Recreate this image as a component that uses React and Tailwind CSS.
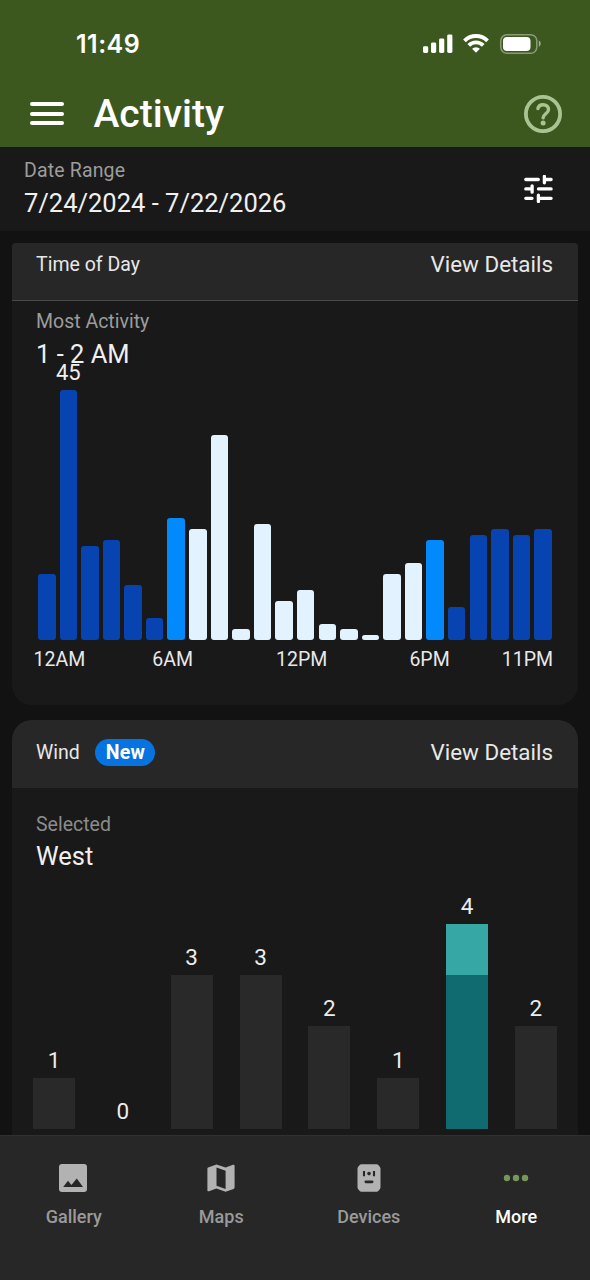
import React from 'react';
import clsx from 'clsx';

// Detections per hour, midnight to 11PM
const hourly = [12, 45, 17, 18, 10, 4, 22, 20, 37, 2, 21, 7, 9, 3, 2, 1, 12, 14, 18, 6, 19, 20, 19, 20];

const wind = [
  { count: 1 },
  { count: 0 },
  { count: 3 },
  { count: 3 },
  { count: 2 },
  { count: 1 },
  { count: 4, selected: true },
  { count: 2 },
];

const MAX_HOURLY = 45;

const hourColor = (hour) => {
  if (hour === 6 || hour === 18) return 'bg-[#0289fb]'; // dawn / dusk
  if (hour > 6 && hour < 18) return 'bg-[#e2f2fe]';
  return 'bg-[#0744b2]';
};

const StatusBar = () => (
  <div className="h-[80px] pt-[32px] pl-[76px] pr-[48px] flex justify-between items-start text-white">
    <span className="font-['Inter'] font-semibold text-[25px] leading-[25px] tracking-[0.5px]">11:49</span>
    <div className="flex items-start pt-[2px]">
      <svg width="30" height="19" viewBox="0 0 30 19" fill="currentColor">
        <rect x="0" y="12.2" width="5.2" height="6.8" rx="1.4" />
        <rect x="8" y="8.6" width="5.2" height="10.4" rx="1.4" />
        <rect x="16.1" y="4.6" width="5.2" height="14.4" rx="1.4" />
        <rect x="24.2" y="0.5" width="5.2" height="18.5" rx="1.4" />
      </svg>
      <svg className="ml-[10px]" width="26" height="19" viewBox="0 0 26 19" fill="none" stroke="currentColor" strokeWidth="3.9">
        <path d="M1.5 6.8a16.3 16.3 0 0 1 23 0" />
        <path d="M5.8 11.4a10.2 10.2 0 0 1 14.4 0" />
        <path d="M13 18.8l-3.9-4a5.4 5.4 0 0 1 7.8 0z" fill="currentColor" stroke="none" />
      </svg>
      <svg className="ml-[11px]" width="42" height="20" viewBox="0 0 42 20">
        <rect x="0.8" y="0.8" width="36" height="18.4" rx="6" fill="none" stroke="#fff" strokeOpacity="0.4" strokeWidth="1.5" />
        <rect x="3" y="3" width="27.5" height="14" rx="4" fill="#fff" />
        <path d="M38.8 6.6c2.6 1 2.6 5.2 0 6.2z" fill="#fff" fillOpacity="0.5" />
      </svg>
    </div>
  </div>
);

const Header = () => (
  <header className="h-[147px] shrink-0 bg-[#3c581f]">
    <StatusBar />
    <div className="h-[67px] pl-[30px] pr-[28px] flex items-center text-white">
      <button aria-label="Menu" className="w-[34px] flex flex-col gap-[5.5px]">
        <span className="h-[4px] rounded-full bg-white"></span>
        <span className="h-[4px] rounded-full bg-white"></span>
        <span className="h-[4px] rounded-full bg-white"></span>
      </button>
      <h1 className="ml-[29.5px] text-[39px] leading-[44px] font-medium">Activity</h1>
      <button aria-label="Help" className="ml-auto">
        <svg width="38" height="38" viewBox="0 0 38 38" fill="none" stroke="#a9c492">
          <circle cx="19" cy="19" r="17.1" strokeWidth="3.8" />
          <path d="M13.9 13.6c.5-2.4 2.5-3.9 5.2-3.9 3.2 0 5.4 2 5.4 4.7 0 4-5.2 4.6-5.4 8.4" strokeWidth="3.4" strokeLinecap="round" />
          <circle cx="19.1" cy="28" r="2.5" fill="#a9c492" stroke="none" />
        </svg>
      </button>
    </div>
  </header>
);

const DateRange = () => (
  <section className="h-[84px] shrink-0 bg-[#191919] pl-6 pr-[37px] pt-[12px] flex justify-between">
    <div>
      <p className="text-[19.5px] leading-[23px] tracking-[0.15px] text-[#9c9c9c]">Date Range</p>
      <p className="mt-[6px] text-[25.5px] leading-[30px] text-[#f0f0f0]">7/24/2024 - 7/22/2026</p>
    </div>
    <button aria-label="Filters" className="self-start mt-[16px]">
      <svg width="29" height="28" viewBox="0 0 29 28" fill="none" stroke="#fff" strokeWidth="3.3" strokeLinecap="round">
        <path d="M1.8 4.5h12.5M20.4 1.4v6.4M20.4 4.5h6.7" />
        <path d="M1.8 13.9h6.1M8.1 10.8v6.4M14.5 13.9h12.6" />
        <path d="M1.8 23.3h6.2M14.4 20.2v6.4M14.4 23.3h12.7" />
      </svg>
    </button>
  </section>
);

const ViewDetails = () => (
  <button className="text-[22.4px] leading-[27px] text-[#e8e8e8]">View Details</button>
);

const TimeOfDayCard = () => (
  <section className="h-[462px] rounded-t-[4px] rounded-b-[20px] bg-[#191919] overflow-hidden">
    <div className="h-[58px] pl-6 pr-[25px] pt-[8px] flex items-start justify-between bg-[#272727] border-b border-[#4b4b4b]">
      <h2 className="text-[19.5px] leading-[27px] text-[#e8e8e8]">Time of Day</h2>
      <ViewDetails />
    </div>

    <div className="pl-6 pt-[9px]">
      <p className="text-[19.5px] leading-[23px] text-[#9c9c9c]">Most Activity</p>
      <p className="mt-[6px] text-[25.5px] leading-[30px] text-[#f0f0f0]">1 - 2 AM</p>
    </div>

    {/* Hourly bars */}
    <div className="mt-[21.3px] h-[250px] pl-[26px] pr-[26px] flex items-end justify-between">
      {hourly.map((count, hour) => (
        <div
          key={hour}
          className={clsx('relative w-[17.5px] rounded-[3px]', hourColor(hour))}
          style={{ height: `${(count / MAX_HOURLY) * 100}%` }}
        >
          {count === MAX_HOURLY && (
            <span className="absolute bottom-full left-1/2 -translate-x-1/2 mb-[3px] text-[22px] leading-[28px] text-[#f0f0f0]">
              {count}
            </span>
          )}
        </div>
      ))}
    </div>

    <div className="mt-[7.7px] pl-[21.5px] pr-[25px] flex justify-between text-[19.5px] leading-[24px] text-[#e8e8e8]">
      <span>12AM</span>
      <span className="ml-[15px]">6AM</span>
      <span className="ml-[31px]">12PM</span>
      <span className="ml-[30px]">6PM</span>
      <span>11PM</span>
    </div>
  </section>
);

const WindCard = () => (
  <section className="mt-[15px] h-[440px] rounded-t-[20px] bg-[#191919] overflow-hidden">
    <div className="h-[68px] pl-6 pr-[25px] pt-[19px] flex items-start justify-between bg-[#272727]">
      <div className="flex items-center">
        <h2 className="text-[19.5px] leading-[27px] text-[#e8e8e8]">Wind</h2>
        <span className="ml-[15.5px] w-[60px] h-[27px] rounded-full bg-[#0574e0] text-center text-[19.5px] leading-[27px] tracking-[0.2px] font-bold text-white">
          New
        </span>
      </div>
      <ViewDetails />
    </div>

    <div className="pl-6 pt-[25px]">
      <p className="text-[19.5px] leading-[23px] text-[#8c8c8c]">Selected</p>
      <p className="mt-[5px] text-[25.5px] leading-[30px] text-[#f0f0f0]">West</p>
    </div>

    <div className="mt-[19px] h-[239px] pl-[21px] pr-[21px] flex items-end justify-between">
      {wind.map(({ count, selected }, i) => (
        <div key={i} className="w-[42px] flex flex-col">
          <span className="mb-[4px] text-center text-[22.5px] leading-[28px] text-[#ececec]">{count}</span>
          {selected && <div className="h-[51px] bg-[#37a7a6]"></div>}
          <div
            className={selected ? 'bg-[#106b70]' : 'bg-[#292929]'}
            style={{ height: (selected ? count - 1 : count) * 51.3 }}
          ></div>
        </div>
      ))}
    </div>
  </section>
);

const GalleryIcon = () => (
  <svg className="mr-px" width="28" height="28" viewBox="0 0 28 28">
    <rect width="28" height="28" rx="3" fill="#b2b2b2" />
    <path d="M4.2 23 9 16.8l3.4 4.2 5.4-6.6L24 23z" fill="#272727" />
  </svg>
);

const MapIcon = () => (
  <svg className="mr-px" width="28" height="28" viewBox="0 0 28 28">
    <path
      fillRule="evenodd"
      d="M1.8 3.2 9.4.4l9.2 3.1L26 .8c1-.3 1.6.2 1.6 1.1v21.6c0 .7-.4 1.1-1 1.4l-8 2.8-9.2-3.2L2 27.2c-1 .4-1.6-.1-1.6-1V4.8c0-.8.5-1.3 1.4-1.6zM9.5 3.6v18.2l9.1 3.1V6.7z"
      fill="#b2b2b2"
    />
  </svg>
);

const DeviceIcon = () => (
  <svg width="28" height="28" viewBox="0 0 28 28">
    <path
      d="M6.3.3h15.4c.8 0 1.3.3 1.8.9l1.3 1.6c.5.6.7 1.1.7 1.9v18.6c0 .8-.2 1.3-.7 1.9l-1.3 1.6c-.5.6-1 .9-1.8.9H6.3c-.8 0-1.3-.3-1.8-.9l-1.3-1.6c-.5-.6-.7-1.1-.7-1.9V4.7c0-.8.2-1.3.7-1.9l1.3-1.6c.5-.6 1-.9 1.8-.9z"
      fill="#b2b2b2"
    />
    <g stroke="#272727" fill="none">
      <path d="M9 6.9v5.4M19 6.9v5.4" strokeWidth="2.1" />
      <path d="M10.9 17.8h6.2" strokeWidth="2.8" strokeLinecap="round" />
    </g>
    <circle cx="14" cy="9.6" r="1.8" fill="#272727" />
  </svg>
);

const MoreIcon = () => (
  <svg className="mr-px" width="28" height="28" viewBox="0 0 28 28" fill="#75985a">
    <circle cx="5" cy="14" r="3.2" />
    <circle cx="14" cy="14" r="3.2" />
    <circle cx="23" cy="14" r="3.2" />
  </svg>
);

const tabs = [
  { label: 'Gallery', icon: GalleryIcon },
  { label: 'Maps', icon: MapIcon },
  { label: 'Devices', icon: DeviceIcon },
  { label: 'More', icon: MoreIcon, active: true },
];

const BottomNav = () => (
  <nav className="h-[145px] shrink-0 grid grid-cols-4 bg-[#272727] border-t border-[#303030]">
    {tabs.map(({ label, icon: Icon, active }) => (
      <button key={label} className="flex flex-col items-center pt-[28px]">
        <Icon />
        <span className={clsx('mt-[14px] text-[18px] leading-[22px] font-medium', active ? 'text-white' : 'text-[#9a9a9a]')}>
          {label}
        </span>
      </button>
    ))}
  </nav>
);

const App = () => {
  return (
    <div className="w-[590px] h-[1280px] flex flex-col overflow-hidden bg-[#121212] font-['Roboto',sans-serif]">
      <Header />
      <DateRange />
      <main className="flex-1 min-h-0 overflow-hidden px-3 pt-3">
        <TimeOfDayCard />
        <WindCard />
      </main>
      <BottomNav />
    </div>
  );
};

export default App;
